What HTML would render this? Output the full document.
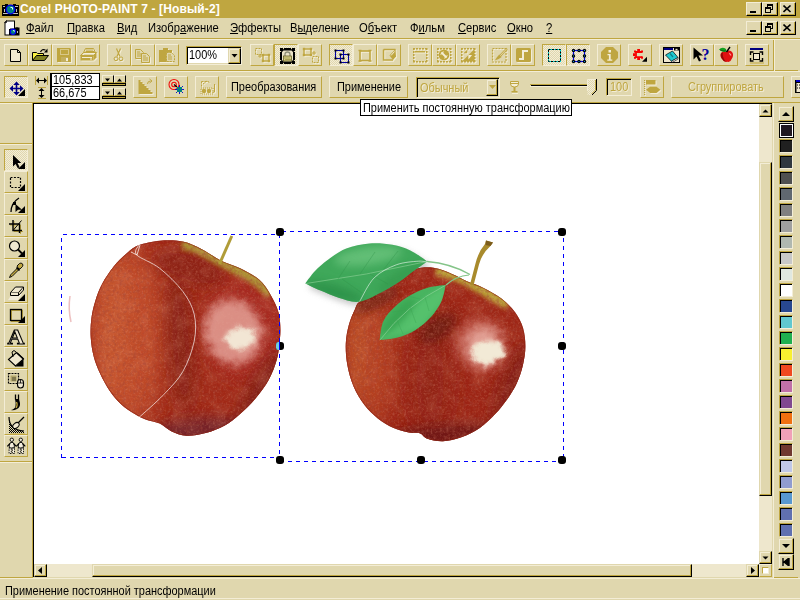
<!DOCTYPE html>
<html lang="ru"><head><meta charset="utf-8"><title>Corel PHOTO-PAINT 7 - [Новый-2]</title>
<style>
html,body{margin:0;padding:0;}
body{width:800px;height:600px;overflow:hidden;position:relative;background:#e0d7ae;font-family:"Liberation Sans","DejaVu Sans",sans-serif;font-size:11px;color:#000;}
.a,.b,.bd,.cap,.sb,.sw,.ln,svg{position:absolute;}
div{box-sizing:border-box;}
.t{position:absolute;white-space:nowrap;line-height:13px;font-size:12px;transform:scaleX(0.912);transform-origin:0 0;}
.b{border:1px solid;border-color:#f3edd6 #bfa640 #bfa640 #f3edd6;background:#e0d7ae;width:24px;height:22px;}
.bd{border:1px solid;border-color:#bfa640 #f3edd6 #f3edd6 #bfa640;width:24px;height:22px;background-color:#f3edd6;background-image:conic-gradient(#e0d7ae 25%,#f3edd6 0 50%,#e0d7ae 0 75%,#f3edd6 0);background-size:2px 2px;}
.cap{border:1px solid;border-color:#f3edd6 #000 #000 #f3edd6;background:#e0d7ae;box-shadow:inset -1px -1px 0 #bfa640;}
.sb{border:1px solid;border-color:#e0d7ae #000 #000 #e0d7ae;background:#e0d7ae;box-shadow:inset -1px -1px 0 #bfa640,inset 1px 1px 0 #f3edd6;}
.ln{height:1px;}
.menu .t{top:22px;transform:scaleX(0.935);}
.dis{color:#bfa640;text-shadow:1px 1px 0 #f3edd6;}
</style></head><body>
<div class="a" style="left:0;top:0;width:800px;height:18px;background:#bfa640"></div>
<div class="t" style="left:20px;top:3px;color:#fff;font-weight:bold;transform:none;letter-spacing:0.13px">Corel PHOTO-PAINT 7 - [Новый-2]</div>
<svg style="left:2px;top:3px" width="17" height="14" viewBox="0 0 17 14"><path d="M0 2h3v-1h3v1h5v-1h3v1h3v11h-17z" fill="#000"/><rect x="1" y="3" width="2" height="1" fill="#c0c0c0"/><rect x="13" y="3" width="3" height="1" fill="#c0c0c0"/><rect x="1" y="10" width="15" height="1" fill="#c0c0c0"/><rect x="14" y="6" width="1" height="3" fill="#c0c0c0"/><rect x="2" y="6" width="1" height="3" fill="#c0c0c0"/><circle cx="8.500" cy="6.500" r="4.300" fill="#008080" stroke="#0000f0" stroke-width="1.300"/><path d="M8.500 4.500h2v2" stroke="#e0ffff" stroke-width="1" fill="none"/></svg>
<div class="cap" style="left:746px;top:2px;width:16px;height:14px"></div>
<div class="a" style="left:750px;top:11px;width:6px;height:2px;background:#000"></div>
<div class="cap" style="left:762px;top:2px;width:16px;height:14px"></div>
<svg style="left:762px;top:2px" width="16" height="14" viewBox="0 0 16 14" shape-rendering="crispEdges"><path d="M5 2h6v2h-6zM10 4h1v4h-1zM5 4h1v1h-1zM9 7h1v1h-1z" fill="#000"/><path d="M3 5h6v2h-6zM3 7h1v4h-1zM8 7h1v4h-1zM3 10h6v1h-6z" fill="#000"/></svg>
<div class="cap" style="left:780px;top:2px;width:16px;height:14px"></div>
<svg style="left:783px;top:5px" width="9" height="8" viewBox="0 0 9 8"><path d="M0.5 0.5L7.5 7M7.5 0.5L0.5 7" stroke="#000" stroke-width="1.6" fill="none"/></svg>
<div class="cap" style="left:746px;top:21px;width:16px;height:14px"></div>
<div class="a" style="left:750px;top:30px;width:6px;height:2px;background:#000"></div>
<div class="cap" style="left:762px;top:21px;width:16px;height:14px"></div>
<svg style="left:762px;top:21px" width="16" height="14" viewBox="0 0 16 14" shape-rendering="crispEdges"><path d="M5 2h6v2h-6zM10 4h1v4h-1zM5 4h1v1h-1zM9 7h1v1h-1z" fill="#000"/><path d="M3 5h6v2h-6zM3 7h1v4h-1zM8 7h1v4h-1zM3 10h6v1h-6z" fill="#000"/></svg>
<div class="cap" style="left:780px;top:21px;width:16px;height:14px"></div>
<svg style="left:783px;top:24px" width="9" height="8" viewBox="0 0 9 8"><path d="M0.5 0.5L7.5 7M7.5 0.5L0.5 7" stroke="#000" stroke-width="1.6" fill="none"/></svg>
<div class="menu">
<span class="t" style="left:26px"><u>Ф</u>айл</span>
<span class="t" style="left:67px"><u>П</u>равка</span>
<span class="t" style="left:117px"><u>В</u>ид</span>
<span class="t" style="left:148px">Изобр<u>а</u>жение</span>
<span class="t" style="left:230px"><u>Э</u>ффекты</span>
<span class="t" style="left:290px">В<u>ы</u>деление</span>
<span class="t" style="left:359px">О<u>б</u>ъект</span>
<span class="t" style="left:410px">Ф<u>и</u>льм</span>
<span class="t" style="left:458px"><u>С</u>ервис</span>
<span class="t" style="left:507px"><u>О</u>кно</span>
<span class="t" style="left:546px"><u>?</u></span>
</div>
<svg style="left:4px;top:20px" width="16" height="16" viewBox="0 0 16 16"><path d="M2.500 0.500h8.500v7h4.500v8h-15v-13z" fill="#000"/><path d="M3 1.500h7v7h-4v6h-4.500v-11z" fill="#fff"/><path d="M0.500 2.500l2-2v2z" fill="#fff" stroke="#000" stroke-width="0.800"/><rect x="5" y="9" width="10" height="6" fill="#000"/><rect x="12" y="7.500" width="2" height="1.500" fill="#000"/><circle cx="9" cy="11.800" r="2.700" fill="#008080" stroke="#0000f0" stroke-width="1.100"/><path d="M9 10.500h1.300v1.300" stroke="#e0ffff" stroke-width="0.800" fill="none"/><rect x="13" y="11" width="1" height="2" fill="#c0c0c0"/></svg>
<div class="ln" style="left:0;top:38px;width:800px;background:#bfa640"></div>
<div class="ln" style="left:0;top:39px;width:800px;background:#f3edd6"></div>
<div class="ln" style="left:0;top:70px;width:798px;background:#bfa640"></div>
<div class="ln" style="left:0;top:71px;width:800px;background:#f3edd6"></div>
<div class="a" style="left:773px;top:40px;width:1px;height:31px;background:#bfa640"></div>
<div class="a" style="left:774px;top:40px;width:1px;height:31px;background:#f3edd6"></div>
<div class="b" style="left:4px;top:44px"></div>
<svg style="left:4px;top:43px" width="24" height="22" viewBox="0 0 24 22"><path d="M6.5 6.5h7l3 3v9h-10z" fill="#f0e8d0" stroke="#000"/><path d="M13.5 6.5v3h3" fill="none" stroke="#000"/></svg>
<div class="b" style="left:28px;top:44px"></div>
<svg style="left:28px;top:43px" width="24" height="22" viewBox="0 0 24 22"><path d="M4.500 17.500v-8h4l1 1h6v2" fill="#f8f040" stroke="#000"/><path d="M5 10h3.500l1 1h5.500v1.500h-7l-3 4z" fill="#f8f040"/><path d="M4.500 17.500l4-5h12l-4 5z" fill="#808020" stroke="#000"/><path d="M12.500 9q1.500-3.500 5-2" fill="none" stroke="#000" stroke-width="1.200"/><path d="M16 9.500h3.500v-4z" fill="#000"/></svg>
<div class="b" style="left:52px;top:44px"></div>
<svg style="left:52px;top:43px" width="24" height="22" viewBox="0 0 24 22"><g transform="translate(1 1)" style="--c:#f3edd6"><path d="M5 5h13l1 1v13h-14z" fill="#f3edd6"/></g><g><path d="M5 5h13l1 1v13h-14z" fill="#bfa640"/></g><rect x="8.5" y="6.500" width="8" height="5" fill="none" stroke="#d8c888"/><rect x="9" y="14" width="7" height="5" fill="#c4b060"/><rect x="14" y="15" width="2" height="3" fill="#f3edd6"/></svg>
<div class="b" style="left:76px;top:44px"></div>
<svg style="left:76px;top:43px" width="24" height="22" viewBox="0 0 24 22"><g transform="translate(1 1)" style="--c:#f3edd6"><path d="M9.500 5.500h8l2 4h-12z" fill="none" stroke="#f3edd6"/><path d="M10 7h7M9.500 8.500h9" stroke="#f3edd6"/><path d="M4.500 12.500l3-3h13l-3 3z" fill="none" stroke="#f3edd6"/><path d="M4.500 12.500h13v5h-13z" fill="#f3edd6"/><path d="M17.500 12.500l3-3v5l-3 3z" fill="#f3edd6"/></g><g><path d="M9.500 5.500h8l2 4h-12z" fill="none" stroke="#bfa640"/><path d="M10 7h7M9.500 8.500h9" stroke="#bfa640"/><path d="M4.500 12.500l3-3h13l-3 3z" fill="none" stroke="#bfa640"/><path d="M4.500 12.500h13v5h-13z" fill="#bfa640"/><path d="M17.500 12.500l3-3v5l-3 3z" fill="#bfa640"/></g><path d="M6 14.500h10" stroke="#f3edd6"/><rect x="14" y="15.500" width="2" height="1" fill="#f3edd6"/></svg>
<div class="b" style="left:107px;top:44px"></div>
<svg style="left:107px;top:43px" width="24" height="22" viewBox="0 0 24 22"><g transform="translate(1 1)" style="--c:#f3edd6"><path d="M9.500 5.500l3.500 8M13.500 5.500l-3.500 8" stroke="#f3edd6" fill="none" stroke-width="1.200"/><circle cx="9" cy="15.800" r="1.900" fill="none" stroke="#f3edd6"/><circle cx="14" cy="15.800" r="1.900" fill="none" stroke="#f3edd6"/></g><g><path d="M9.500 5.500l3.500 8M13.500 5.500l-3.500 8" stroke="#bfa640" fill="none" stroke-width="1.200"/><circle cx="9" cy="15.800" r="1.900" fill="none" stroke="#bfa640"/><circle cx="14" cy="15.800" r="1.900" fill="none" stroke="#bfa640"/></g></svg>
<div class="b" style="left:131px;top:44px"></div>
<svg style="left:131px;top:43px" width="24" height="22" viewBox="0 0 24 22"><g transform="translate(1 1)" style="--c:#f3edd6"><path d="M4.500 6.500h5l3 3v6h-8z" fill="#e0d7ae" stroke="#f3edd6"/><path d="M6 9h3M6 11h5M6 13h5" stroke="#f3edd6"/><path d="M10.500 10.500h5l3 3v6h-8z" fill="#e0d7ae" stroke="#f3edd6"/><path d="M12 13h3M12 15h5M12 17h5" stroke="#f3edd6"/></g><g><path d="M4.500 6.500h5l3 3v6h-8z" fill="#e0d7ae" stroke="#bfa640"/><path d="M6 9h3M6 11h5M6 13h5" stroke="#bfa640"/><path d="M10.500 10.500h5l3 3v6h-8z" fill="#e0d7ae" stroke="#bfa640"/><path d="M12 13h3M12 15h5M12 17h5" stroke="#bfa640"/></g></svg>
<div class="b" style="left:155px;top:44px"></div>
<svg style="left:155px;top:43px" width="24" height="22" viewBox="0 0 24 22"><g transform="translate(1 1)" style="--c:#f3edd6"><path d="M4 7h4v-2h5v2h4v12h-13z" fill="#f3edd6"/></g><g><path d="M4 7h4v-2h5v2h4v12h-13z" fill="#bfa640"/></g><path d="M11.500 9.500h5l3 3v6h-8z" fill="#e0d7ae" stroke="#bfa640" stroke-dasharray="2 1"/><path d="M13 12h3M13 14h4M13 16h4" stroke="#bfa640"/></svg>
<div class="b" style="left:250px;top:44px"></div>
<svg style="left:250px;top:43px" width="24" height="22" viewBox="0 0 24 22"><g transform="translate(1 1)" style="--c:#f3edd6"><rect x="5.500" y="5.500" width="6" height="6" fill="none" stroke="#f3edd6" stroke-dasharray="2 1"/><path d="M8 13h4M10 11v4" stroke="#f3edd6"/><rect x="13" y="12" width="6" height="6" fill="none" stroke="#f3edd6" stroke-width="1.400"/><rect x="11.8" y="10.8" width="2.400" height="2.400" fill="#f3edd6"/><rect x="11.8" y="16.8" width="2.400" height="2.400" fill="#f3edd6"/><rect x="17.8" y="10.8" width="2.400" height="2.400" fill="#f3edd6"/><rect x="17.8" y="16.8" width="2.400" height="2.400" fill="#f3edd6"/></g><g><rect x="5.500" y="5.500" width="6" height="6" fill="none" stroke="#bfa640" stroke-dasharray="2 1"/><path d="M8 13h4M10 11v4" stroke="#bfa640"/><rect x="13" y="12" width="6" height="6" fill="none" stroke="#bfa640" stroke-width="1.400"/><rect x="11.8" y="10.8" width="2.400" height="2.400" fill="#bfa640"/><rect x="11.8" y="16.8" width="2.400" height="2.400" fill="#bfa640"/><rect x="17.8" y="10.8" width="2.400" height="2.400" fill="#bfa640"/><rect x="17.8" y="16.8" width="2.400" height="2.400" fill="#bfa640"/></g></svg>
<div class="bd" style="left:274px;top:44px"></div>
<svg style="left:274px;top:43px" width="24" height="22" viewBox="0 0 24 22"><path d="M6 5h15v16h-15z" fill="#000"/><path d="M6 8.500h1.200M6 17.500h1.200M19.800 8.500h1.200M19.800 17.500h1.200M9.500 5v1.200M17.500 5v1.200M9.500 19.800v1.200M17.500 19.800v1.200" stroke="#e0d7ae"/><path d="M9.500 7.500h8l1.500 1.500v8l-1.500 1.500h-8l-1.500-1.500v-8z" fill="#ece4c8"/><path d="M11 13.500v-2.200q0-2.300 2.500-2.300t2.500 2.300v2.200" fill="none" stroke="#909078" stroke-width="1.300"/><rect x="9.500" y="13" width="8" height="5" fill="#d8d088" stroke="#585018" stroke-width="0.700"/><path d="M10.500 15h6" stroke="#787020" stroke-dasharray="1 1"/><path d="M10.500 16.500h6" stroke="#787020" stroke-dasharray="1 1" stroke-dashoffset="1"/></svg>
<div class="b" style="left:298px;top:44px"></div>
<svg style="left:298px;top:43px" width="24" height="22" viewBox="0 0 24 22"><g transform="translate(1 1)" style="--c:#f3edd6"><rect x="6" y="6" width="7" height="6" fill="none" stroke="#f3edd6" stroke-width="1.400"/><rect x="4.8" y="4.8" width="2.400" height="2.400" fill="#f3edd6"/><rect x="4.8" y="10.8" width="2.400" height="2.400" fill="#f3edd6"/><rect x="11.8" y="4.8" width="2.400" height="2.400" fill="#f3edd6"/><rect x="11.8" y="10.8" width="2.400" height="2.400" fill="#f3edd6"/><rect x="14.500" y="13.500" width="6" height="6" fill="none" stroke="#f3edd6" stroke-dasharray="2 1"/><path d="M14 10h4M16 8v4" stroke="#f3edd6"/></g><g><rect x="6" y="6" width="7" height="6" fill="none" stroke="#bfa640" stroke-width="1.400"/><rect x="4.8" y="4.8" width="2.400" height="2.400" fill="#bfa640"/><rect x="4.8" y="10.8" width="2.400" height="2.400" fill="#bfa640"/><rect x="11.8" y="4.8" width="2.400" height="2.400" fill="#bfa640"/><rect x="11.8" y="10.8" width="2.400" height="2.400" fill="#bfa640"/><rect x="14.500" y="13.500" width="6" height="6" fill="none" stroke="#bfa640" stroke-dasharray="2 1"/><path d="M14 10h4M16 8v4" stroke="#bfa640"/></g></svg>
<div class="bd" style="left:329px;top:44px"></div>
<svg style="left:329px;top:43px" width="24" height="22" viewBox="0 0 24 22"><rect x="6.5" y="7.5" width="8" height="8" fill="none" stroke="#0000a0" stroke-width="1.100"/><rect x="5.5" y="6.5" width="2" height="2" fill="#000"/><rect x="5.5" y="14.5" width="2" height="2" fill="#000"/><rect x="13.5" y="6.5" width="2" height="2" fill="#000"/><rect x="13.5" y="14.5" width="2" height="2" fill="#000"/><rect x="11.5" y="11.5" width="8" height="8" fill="none" stroke="#0000a0" stroke-width="1.100"/><rect x="10.5" y="10.5" width="2" height="2" fill="#000"/><rect x="10.5" y="18.5" width="2" height="2" fill="#000"/><rect x="18.5" y="10.5" width="2" height="2" fill="#000"/><rect x="18.5" y="18.5" width="2" height="2" fill="#000"/></svg>
<div class="b" style="left:353px;top:44px"></div>
<svg style="left:353px;top:43px" width="24" height="22" viewBox="0 0 24 22"><g transform="translate(1 1)" style="--c:#f3edd6"><rect x="7" y="8" width="10" height="9.500" fill="none" stroke="#f3edd6" stroke-width="1.600"/><path d="M5.500 7.500h3M5.500 18h3M15.500 7.500h3M15.500 18h3" stroke="#f3edd6" stroke-width="1.600"/></g><g><rect x="7" y="8" width="10" height="9.500" fill="none" stroke="#bfa640" stroke-width="1.600"/><path d="M5.500 7.500h3M5.500 18h3M15.500 7.500h3M15.500 18h3" stroke="#bfa640" stroke-width="1.600"/></g></svg>
<div class="b" style="left:377px;top:44px"></div>
<svg style="left:377px;top:43px" width="24" height="22" viewBox="0 0 24 22"><g transform="translate(1 1)" style="--c:#f3edd6"><path d="M6.500 6.500h12M6.500 6.500v10.500h9.500" fill="none" stroke="#f3edd6" stroke-width="1.500"/><path d="M18.500 6l-6 6.500l3.500 4.500l3-3.500z" fill="#f3edd6"/></g><g><path d="M6.500 6.500h12M6.500 6.500v10.500h9.500" fill="none" stroke="#bfa640" stroke-width="1.500"/><path d="M18.500 6l-6 6.500l3.500 4.500l3-3.500z" fill="#bfa640"/></g><path d="M17.500 8.500l-3.500 4" stroke="#f3edd6"/></svg>
<div class="b" style="left:408px;top:44px"></div>
<svg style="left:408px;top:43px" width="24" height="22" viewBox="0 0 24 22"><g transform="translate(1 1)" style="--c:#f3edd6"><path d="M5 5.750h14M5 18.750h14M5.750 5v14M18.750 5v14" stroke="#f3edd6" stroke-width="1.500" stroke-dasharray="2 1" fill="none"/><path d="M7 8.750h10" fill="none" stroke="#f3edd6" stroke-width="1.500"/></g><g><path d="M5 5.750h14M5 18.750h14M5.750 5v14M18.750 5v14" stroke="#bfa640" stroke-width="1.500" stroke-dasharray="2 1" fill="none"/><path d="M7 8.750h10" fill="none" stroke="#bfa640" stroke-width="1.500"/></g></svg>
<div class="b" style="left:432px;top:44px"></div>
<svg style="left:432px;top:43px" width="24" height="22" viewBox="0 0 24 22"><g transform="translate(1 1)" style="--c:#f3edd6"><path d="M5 5.750h14M5 18.750h14M5.750 5v14M18.750 5v14" stroke="#f3edd6" stroke-width="1.500" stroke-dasharray="2 1" fill="none"/><circle cx="12" cy="12" r="5.400" fill="#f3edd6"/></g><g><path d="M5 5.750h14M5 18.750h14M5.750 5v14M18.750 5v14" stroke="#bfa640" stroke-width="1.500" stroke-dasharray="2 1" fill="none"/><circle cx="12" cy="12" r="5.400" fill="#bfa640"/></g><path d="M9.500 9.500l5 5" stroke="#f3edd6" stroke-width="1.800"/><path d="M8.800 12a3.200 3.200 0 0 1 3.200-3.200M15.200 12a3.200 3.200 0 0 1-3.200 3.200" stroke="#f3edd6" stroke-width="0.800" fill="none"/></svg>
<div class="b" style="left:456px;top:44px"></div>
<svg style="left:456px;top:43px" width="24" height="22" viewBox="0 0 24 22"><g transform="translate(1 1)" style="--c:#f3edd6"><path d="M5 5.750h14M5 18.750h14M5.750 5v14M18.750 5v14" stroke="#f3edd6" stroke-width="1.500" stroke-dasharray="2 1" fill="none"/><path d="M18.500 6v12.500h-12.500zM7.500 10.250h3.750v-3.400z" fill="#f3edd6"/></g><g><path d="M5 5.750h14M5 18.750h14M5.750 5v14M18.750 5v14" stroke="#bfa640" stroke-width="1.500" stroke-dasharray="2 1" fill="none"/><path d="M18.500 6v12.500h-12.500zM7.500 10.250h3.750v-3.400z" fill="#bfa640"/></g><path d="M12.400 12.100h3.700l-3.700 4.500z" fill="#f3edd6"/></svg>
<div class="b" style="left:487px;top:44px"></div>
<svg style="left:487px;top:43px" width="24" height="22" viewBox="0 0 24 22"><g transform="translate(1 1)" style="--c:#f3edd6"><rect x="5.500" y="5.500" width="13.500" height="13.500" fill="none" stroke="#f3edd6" stroke-width="1.200" stroke-dasharray="2 1"/></g><g><rect x="5.500" y="5.500" width="13.500" height="13.500" fill="none" stroke="#bfa640" stroke-width="1.200" stroke-dasharray="2 1"/></g><path d="M20 5.500l-7 7.500" stroke="#bfa640" stroke-width="2.200"/><path d="M19.600 5.900l-6.500 7" stroke="#f3edd6" stroke-width="0.700"/><path d="M12.200 11.500l2.500 2.500l-3 2l-4 1.500l2-3z" fill="#bfa640"/></svg>
<div class="b" style="left:511px;top:44px"></div>
<svg style="left:511px;top:43px" width="24" height="22" viewBox="0 0 24 22"><g transform="translate(1 1)" style="--c:#f3edd6"><rect x="5" y="5" width="15" height="14" rx="1.500" fill="#f3edd6"/></g><g><rect x="5" y="5" width="15" height="14" rx="1.500" fill="#bfa640"/></g><path d="M8 16h4v-8h5" fill="none" stroke="#f3edd6" stroke-width="2"/></svg>
<div class="bd" style="left:542px;top:44px"></div>
<svg style="left:542px;top:43px" width="24" height="22" viewBox="0 0 24 22"><rect x="6.500" y="6.500" width="12" height="12" fill="none" stroke="#00e0e0"/><rect x="6.500" y="6.500" width="12" height="12" fill="none" stroke="#000" stroke-dasharray="2 1.500"/></svg>
<div class="bd" style="left:566px;top:44px"></div>
<svg style="left:566px;top:43px" width="24" height="22" viewBox="0 0 24 22"><rect x="7.500" y="7.500" width="11" height="11" fill="none" stroke="#0000f0" stroke-width="1.200"/><circle cx="7.5" cy="7.5" r="1.700" fill="#000"/><rect x="7.0" y="7.0" width="1" height="1" fill="#0090e0"/><circle cx="7.5" cy="13" r="1.700" fill="#000"/><rect x="7.0" y="12.5" width="1" height="1" fill="#0090e0"/><circle cx="7.5" cy="18.5" r="1.700" fill="#000"/><rect x="7.0" y="18.0" width="1" height="1" fill="#0090e0"/><circle cx="13" cy="7.5" r="1.700" fill="#000"/><rect x="12.5" y="7.0" width="1" height="1" fill="#0090e0"/><circle cx="13" cy="18.5" r="1.700" fill="#000"/><rect x="12.5" y="18.0" width="1" height="1" fill="#0090e0"/><circle cx="18.5" cy="7.5" r="1.700" fill="#000"/><rect x="18.0" y="7.0" width="1" height="1" fill="#0090e0"/><circle cx="18.5" cy="13" r="1.700" fill="#000"/><rect x="18.0" y="12.5" width="1" height="1" fill="#0090e0"/><circle cx="18.5" cy="18.5" r="1.700" fill="#000"/><rect x="18.0" y="18.0" width="1" height="1" fill="#0090e0"/></svg>
<div class="b" style="left:597px;top:44px"></div>
<svg style="left:597px;top:43px" width="24" height="22" viewBox="0 0 24 22"><path d="M9 4h7l5 5v6l-5 5h-7l-5-5v-6z" fill="#bfa640"/><rect x="11.500" y="7" width="2.500" height="2.500" fill="#f3edd6"/><path d="M10.500 11h3.200v5.500h1.600v1.200h-5v-1.200h1.600v-4.300h-1.400z" fill="#f3edd6"/></svg>
<div class="b" style="left:628px;top:44px"></div>
<svg style="left:628px;top:43px" width="24" height="22" viewBox="0 0 24 22"><path d="M14.200 9H8V14.200H14.200" fill="none" stroke="#f80000" stroke-width="1.800"/><path d="M9.200 6h2.800v2.400h-2.800zM9.200 14.800h2.800v2.200h-2.800zM5 10.200h2.400v2.800h-2.400zM6 7.400h2v2h-2zM6 13.800h2v2h-2zM13 7.400h2v2.200h-2zM13 13.600h2v2.200h-2z" fill="#f80000"/><path d="M14 18.700h5v-5z" fill="#000"/></svg>
<div class="b" style="left:659px;top:44px"></div>
<svg style="left:659px;top:43px" width="24" height="22" viewBox="0 0 24 22"><rect x="4" y="4" width="17" height="16" fill="#000"/><rect x="5" y="5" width="15" height="14" fill="#f0e8d0"/><rect x="5" y="5" width="9" height="2" fill="#000080"/><rect x="15" y="5" width="5" height="2.500" fill="#000"/><rect x="16.500" y="5.800" width="2" height="1.500" fill="#f0e8d0"/><path d="M6.500 12l7-4l5.500 6.500l-6.500 3.800z" fill="#20c8d0" stroke="#000" stroke-width="0.700"/><path d="M12.500 18.300l6.500-3.800v1.600l-5.500 3.200z" fill="#f8f8f8" stroke="#000" stroke-width="0.600"/><path d="M11 10.500l3 3.500" stroke="#108088" stroke-width="1.200"/></svg>
<div class="b" style="left:690px;top:44px"></div>
<svg style="left:690px;top:43px" width="24" height="22" viewBox="0 0 24 22"><path d="M3.500 4.500v12l3-3l2.500 5l2-1l-2.500-5h4.500z" fill="#000"/><text x="11.500" y="17" font-family="Liberation Serif,serif" font-weight="bold" font-size="16" fill="#0000a0">?</text></svg>
<div class="b" style="left:714px;top:44px"></div>
<svg style="left:714px;top:43px" width="24" height="22" viewBox="0 0 24 22"><path d="M12 8.500q3-1.800 5.500 0q2.500 2.200 1 6q-1.500 3.800-4 4.600q-1.200-.5-2.300 0q-3-.6-5-4q-2-4 .8-6.200q2-1.400 4 0z" fill="#e01010"/><path d="M7.500 10q-1.500 2 0 5q1.500 3 4.500 4q-2.500-3-3-5.500t0-4z" fill="#900808"/><path d="M15 10.500q1.500.3 2 2" stroke="#ff9090" stroke-width="1.200" fill="none"/><path d="M5 6.500q3-3 7-.5l.5 2.500q-4 1.500-7.500-2z" fill="#10a020"/><path d="M6 7q3 1 6 1" stroke="#086010" stroke-width="0.800" fill="none"/><path d="M12.500 9l3.500-5" stroke="#000" stroke-width="1.400"/></svg>
<div class="b" style="left:745px;top:44px"></div>
<svg style="left:745px;top:43px" width="24" height="22" viewBox="0 0 24 22"><rect x="5" y="5" width="13" height="2" fill="#000080"/><path d="M5.500 12v-3h3M14.500 9h3v3M17.500 15v3h-3M8.500 18h-3v-3" fill="none" stroke="#000" stroke-width="1.400"/><rect x="8.500" y="10.500" width="6" height="6" fill="#f0e8d0" stroke="#000"/><path d="M5 20h14" stroke="#bfa640"/></svg>
<div class="a" style="left:186px;top:46px;width:56px;height:19px;border:1px solid;border-color:#bfa640 #f3edd6 #f3edd6 #bfa640;background:#fff;box-shadow:inset 1px 1px 0 #000,inset -1px -1px 0 #e0d7ae"></div>
<div class="t" style="left:189px;top:49px">100%</div>
<div class="sb" style="left:228px;top:48px;width:13px;height:16px"></div>
<svg style="left:231px;top:54px" width="7" height="4"><path d="M0.500 0h6L3.500 3.500z" fill="#000"/></svg>
<div class="bd" style="left:4px;top:76px"></div>
<svg style="left:4px;top:76px" width="24" height="22" viewBox="0 0 24 22"><path d="M12.500 5.500l3.200 3.500h-2.400v2.700h2.700v-2.400l3.500 3.200l-3.500 3.200v-2.400h-2.700v2.700h2.400l-3.200 3.500l-3.200-3.500h2.400v-2.700h-2.700v2.400l-3.500-3.200l3.500-3.200v2.400h2.700v-2.700h-2.400z" fill="#000088"/><path d="M21 20h-7l7-7z" fill="#000"/></svg>
<div class="a" style="left:50px;top:73px;width:50px;height:14px;background:#fff;border:1px solid #000;border-width:1px 1px 1px 2px"></div>
<div class="t" style="left:53px;top:74px">105,833</div>
<div class="a" style="left:50px;top:86px;width:50px;height:14px;background:#fff;border:1px solid #000;border-width:1px 1px 1px 2px"></div>
<div class="t" style="left:53px;top:87px">66,675</div>
<svg style="left:34px;top:74px" width="16" height="26" viewBox="34 74 16 26"><path d="M35.5 76v9M47.5 76v9M38 87.500h8M38 98.500h8" stroke="#bfa640" fill="none"/><path d="M37 80.500h9" stroke="#000"/><path d="M36 80.500l3-3v6zM47 80.500l-3-3v6zM41.500 88l-3 3h6zM41.500 98l-3-3h6z" fill="#000"/><path d="M41.500 90v6" stroke="#000"/></svg>
<div class="a" style="left:102px;top:75px;width:12px;height:8px;background:#e0d7ae;border:1px solid;border-color:#f3edd6 #000 #bfa640 #f3edd6"></div>
<svg style="left:105px;top:78px" width="5" height="4"><path d="M0 0.500h5L2.500 3.500z" fill="#000"/></svg>
<div class="a" style="left:114px;top:75px;width:12px;height:8px;background:#e0d7ae;border:1px solid;border-color:#f3edd6 #000 #bfa640 #f3edd6"></div>
<svg style="left:117px;top:78px" width="5" height="4"><path d="M0 3.500h5L2.500 0.500z" fill="#000"/></svg>
<div class="a" style="left:102px;top:83px;width:24px;height:3px;background:#bfa640;border:1px solid #000"></div>
<div class="a" style="left:102px;top:88px;width:12px;height:8px;background:#e0d7ae;border:1px solid;border-color:#f3edd6 #000 #bfa640 #f3edd6"></div>
<svg style="left:105px;top:91px" width="5" height="4"><path d="M0 0.500h5L2.500 3.500z" fill="#000"/></svg>
<div class="a" style="left:114px;top:88px;width:12px;height:8px;background:#e0d7ae;border:1px solid;border-color:#f3edd6 #000 #bfa640 #f3edd6"></div>
<svg style="left:117px;top:91px" width="5" height="4"><path d="M0 3.500h5L2.500 0.500z" fill="#000"/></svg>
<div class="a" style="left:102px;top:96px;width:24px;height:3px;background:#bfa640;border:1px solid #000"></div>
<div class="b" style="left:133px;top:76px"></div>
<svg style="left:133px;top:76px" width="24" height="22" viewBox="0 0 24 22"><g transform="translate(1 1)" style="--c:#f3edd6"><path d="M5.500 4v14h14v-2h-2v-2h-2v-2h-2v-2h-2v-2h-2v-2h-2v-2z" fill="#f3edd6"/></g><g><path d="M5.500 4v14h14v-2h-2v-2h-2v-2h-2v-2h-2v-2h-2v-2h-2v-2z" fill="#bfa640"/></g><path d="M14.500 8q0-3 3-3" fill="none" stroke="#bfa640"/><path d="M16.500 3l2.500 2l-2.500 2" fill="none" stroke="#bfa640"/></svg>
<div class="b" style="left:164px;top:76px"></div>
<svg style="left:164px;top:76px" width="24" height="22" viewBox="0 0 24 22"><circle cx="10" cy="8.500" r="5" fill="none" stroke="#f01010" stroke-width="1.100"/><circle cx="10" cy="8.500" r="2.300" fill="none" stroke="#f01010" stroke-width="1.100"/><path d="M12 10l7 7M19 10l-7 7M15.500 9v9M11 13.500h9" stroke="#0000d0" stroke-width="0.900"/><rect x="13" y="11" width="5" height="5" fill="#008080"/><path d="M10 8.500l3 2.500" stroke="#000" stroke-width="1.200"/></svg>
<div class="b" style="left:195px;top:76px"></div>
<svg style="left:195px;top:76px" width="24" height="22" viewBox="0 0 24 22"><g transform="translate(1 1)" style="--c:#f3edd6"><path d="M6.500 5.500h7M6.500 5.500v5M8 8l4-3l3 2" fill="none" stroke="#f3edd6" stroke-dasharray="2 1"/><path d="M6 12h12v6h-12z" fill="none" stroke="#f3edd6" stroke-dasharray="1 1"/><circle cx="9" cy="15" r="2.200" fill="#f3edd6"/><circle cx="14" cy="15" r="2.200" fill="#f3edd6"/><path d="M19.500 8v8h-2" fill="none" stroke="#f3edd6"/></g><g><path d="M6.500 5.500h7M6.500 5.500v5M8 8l4-3l3 2" fill="none" stroke="#bfa640" stroke-dasharray="2 1"/><path d="M6 12h12v6h-12z" fill="none" stroke="#bfa640" stroke-dasharray="1 1"/><circle cx="9" cy="15" r="2.200" fill="#bfa640"/><circle cx="14" cy="15" r="2.200" fill="#bfa640"/><path d="M19.500 8v8h-2" fill="none" stroke="#bfa640"/></g></svg>
<div class="b" style="left:640px;top:76px"></div>
<svg style="left:640px;top:76px" width="24" height="22" viewBox="0 0 24 22"><g transform="translate(1 1)" style="--c:#f3edd6"><path d="M4.500 4v15" stroke="#f3edd6" stroke-dasharray="1 1"/><rect x="6" y="4" width="9.500" height="4.500" fill="#f3edd6"/><path d="M6 13.800l4-3h6.500l4 3l-4 3.200h-6.500z" fill="#f3edd6"/></g><g><path d="M4.500 4v15" stroke="#bfa640" stroke-dasharray="1 1"/><rect x="6" y="4" width="9.500" height="4.500" fill="#bfa640"/><path d="M6 13.800l4-3h6.500l4 3l-4 3.200h-6.500z" fill="#bfa640"/></g></svg>
<div class="b" style="left:226px;top:76px;width:96px"></div><div class="t" style="left:231px;top:81px">Преобразования</div>
<div class="b" style="left:329px;top:76px;width:79px"></div><div class="t" style="left:337px;top:81px">Применение</div>
<div class="b" style="left:671px;top:76px;width:113px"></div><div class="t dis" style="left:688px;top:81px">Сгруппировать</div>
<div class="b" style="left:791px;top:76px;width:24px"></div>
<svg style="left:794px;top:79px" width="6" height="16" viewBox="0 0 6 16"><rect x="1" y="1" width="5" height="13" fill="#000"/><rect x="2" y="1" width="4" height="2" fill="#0000c0"/><rect x="2.500" y="4" width="3.500" height="9" fill="#f0e8d0"/><path d="M3 6h3M3 9h3" stroke="#000" stroke-dasharray="1 1"/></svg>
<div class="a" style="left:416px;top:77px;width:84px;height:21px;border:1px solid;border-color:#bfa640 #f3edd6 #f3edd6 #bfa640;box-shadow:inset 1px 1px 0 #000,inset -1px -1px 0 #e0d7ae"></div>
<div class="t dis" style="left:420px;top:82px">Обычный</div>
<div class="sb" style="left:486px;top:79px;width:12px;height:17px"></div>
<svg style="left:489px;top:85px" width="7" height="4"><path d="M0 0h7L3.5 4z" fill="#bfa640"/></svg>
<div class="ln" style="left:530px;top:84px;width:58px;background:#bfa640"></div><div class="ln" style="left:531px;top:85px;width:57px;background:#000"></div><div class="ln" style="left:530px;top:86px;width:58px;background:#f3edd6"></div>
<svg style="left:508px;top:79px" width="14" height="16" viewBox="0 0 14 16"><path d="M2.500 2.500h8v2.500q0 3-4 3t-4-3z" fill="#f3edd6" stroke="#bfa640"/><path d="M3 4.500h7" stroke="#bfa640"/><path d="M5.500 8h2v4h-2z" fill="#bfa640"/><path d="M3.500 12h6v1.500h-6z" fill="#bfa640"/><path d="M4 14.500h6" stroke="#f3edd6"/></svg>
<svg style="left:587px;top:79px" width="11" height="17" viewBox="0 0 11 17"><defs><pattern id="dt2" width="2" height="2" patternUnits="userSpaceOnUse"><rect width="2" height="2" fill="#f3edd6"/><rect width="1" height="1" fill="#e0d7ae"/><rect x="1" y="1" width="1" height="1" fill="#e0d7ae"/></pattern></defs><path d="M0.5 0.5h9v11l-4.5 4.5h-4.500z" fill="url(#dt2)"/><path d="M0.5 12V0.5H9.5" stroke="#f3edd6" fill="none"/><path d="M9.5 0V11.5L5 16" stroke="#000" fill="none"/><path d="M8.5 1V11L4.5 15" stroke="#bfa640" fill="none"/></svg>
<div class="a" style="left:606px;top:78px;width:26px;height:18px;border:1px solid;border-color:#bfa640 #f3edd6 #f3edd6 #bfa640;box-shadow:inset 1px 1px 0 #000"></div>
<div class="t dis" style="left:610px;top:81px">100</div>
<div class="ln" style="left:0;top:102px;width:800px;background:#bfa640"></div>
<div class="ln" style="left:0;top:103px;width:32px;background:#f3edd6"></div>
<div class="a" style="left:33px;top:103px;width:739px;height:474px;background:#000"></div>
<div class="a" id="canvas" style="left:34px;top:104px;width:725px;height:460px;background:#fff;overflow:hidden">
<svg style="left:0;top:0" width="725" height="460" viewBox="34 104 725 460">
<defs>
<filter id="tx" x="0" y="0" width="100%" height="100%"><feTurbulence type="fractalNoise" baseFrequency="0.45" numOctaves="2" seed="4" result="n"/><feColorMatrix in="n" type="matrix" values="0 0 0 0 0.86  0 0 0 0 0.42  0 0 0 0 0.28  2.4 0 0 0 -1.15" result="c"/><feComposite in="c" in2="SourceGraphic" operator="in"/></filter>
<filter id="tx2" x="0" y="0" width="100%" height="100%"><feTurbulence type="fractalNoise" baseFrequency="0.3" numOctaves="3" seed="11" result="n"/><feColorMatrix in="n" type="matrix" values="0 0 0 0 0.36  0 0 0 0 0.06  0 0 0 0 0.04  0 2.6 0 0 -1.2" result="c"/><feComposite in="c" in2="SourceGraphic" operator="in"/></filter>
<filter id="tx3" x="0" y="0" width="100%" height="100%"><feTurbulence type="fractalNoise" baseFrequency="0.07" numOctaves="2" seed="2" result="n"/><feColorMatrix in="n" type="matrix" values="0 0 0 0 0.80  0 0 0 0 0.36  0 0 0 0 0.22  0 0 2.2 0 -0.95" result="c"/><feComposite in="c" in2="SourceGraphic" operator="in"/></filter>
<filter id="rough" x="-5%" y="-5%" width="110%" height="110%"><feTurbulence type="fractalNoise" baseFrequency="0.12" numOctaves="2" seed="7" result="n"/><feDisplacementMap in="SourceGraphic" in2="n" scale="9" xChannelSelector="R" yChannelSelector="G"/></filter>
<filter id="bl1" x="-60%" y="-60%" width="220%" height="220%"><feGaussianBlur stdDeviation="1"/></filter>
<filter id="bl2" x="-60%" y="-60%" width="220%" height="220%"><feGaussianBlur stdDeviation="2"/></filter>
<filter id="bl3" x="-60%" y="-60%" width="220%" height="220%"><feGaussianBlur stdDeviation="3"/></filter>
<filter id="bl4" x="-60%" y="-60%" width="220%" height="220%"><feGaussianBlur stdDeviation="4"/></filter>
<filter id="bl6" x="-60%" y="-60%" width="220%" height="220%"><feGaussianBlur stdDeviation="6"/></filter>
<filter id="bl8" x="-60%" y="-60%" width="220%" height="220%"><feGaussianBlur stdDeviation="8"/></filter>
<filter id="bl12" x="-60%" y="-60%" width="220%" height="220%"><feGaussianBlur stdDeviation="12"/></filter>
<linearGradient id="lf" x1="0" y1="0" x2="1" y2="1"><stop offset="0" stop-color="#56b86a"/><stop offset="0.5" stop-color="#44a85a"/><stop offset="1" stop-color="#2f9448"/></linearGradient>
<linearGradient id="lf2" x1="1" y1="0" x2="0" y2="1"><stop offset="0" stop-color="#5cc070"/><stop offset="0.6" stop-color="#44ac5a"/><stop offset="1" stop-color="#36a04e"/></linearGradient>
<clipPath id="cL"><path d="M138.6 245.3C144.0 243.2 152.3 241.3 159.7 240.7C167.0 240.1 175.7 240.1 182.7 241.5C189.7 242.9 195.4 246.0 201.8 249.2C208.2 252.4 214.6 257.5 221.0 260.7C227.4 263.9 233.7 265.1 240.1 268.3C246.5 271.5 254.2 275.3 259.3 279.8C264.4 284.3 267.6 289.8 270.8 295.2C274.0 300.6 276.9 306.6 278.5 312.4C280.1 318.1 280.3 324.3 280.4 329.7C280.5 335.1 279.8 339.9 279.2 345.0C278.6 350.1 278.3 354.6 276.6 360.3C274.9 366.1 272.4 373.1 268.9 379.5C265.4 385.9 260.3 392.9 255.5 398.6C250.7 404.4 245.2 409.5 240.1 414.0C235.0 418.5 230.6 422.3 224.8 425.5C219.1 428.7 212.0 431.4 205.6 433.1C199.2 434.8 192.2 436.1 186.5 435.8C180.8 435.5 175.7 433.2 171.2 431.2C166.7 429.2 163.9 425.5 159.7 423.6C155.5 421.7 150.4 421.3 146.2 419.7C142.0 418.1 138.8 416.6 134.7 414.0C130.5 411.4 125.4 408.2 121.3 404.4C117.2 400.6 113.3 396.1 109.8 391.0C106.3 385.9 102.9 379.4 100.2 373.7C97.5 367.9 95.3 362.6 93.7 356.5C92.1 350.4 91.1 343.7 90.7 337.3C90.3 330.9 90.6 324.3 91.4 318.2C92.2 312.1 93.5 306.6 95.3 300.9C97.1 295.1 99.1 289.4 102.2 283.7C105.3 277.9 109.6 271.5 113.7 266.4C117.8 261.3 122.9 256.5 127.1 253.0C131.2 249.5 133.2 247.4 138.6 245.3Z"/></clipPath>
<clipPath id="cR"><path d="M415.0 269.0C420.9 267.3 427.4 266.9 433.6 267.7C439.8 268.5 446.4 271.6 452.0 273.9C457.6 276.2 462.3 279.3 467.5 281.6C472.7 283.9 477.4 284.9 483.0 287.7C488.6 290.5 496.0 294.4 501.4 298.5C506.8 302.6 511.7 307.5 515.3 312.4C518.9 317.3 521.3 322.1 523.0 327.8C524.7 333.5 525.4 340.1 525.4 346.3C525.4 352.5 524.4 358.6 523.0 364.8C521.6 371.0 519.4 377.7 516.8 383.3C514.2 388.9 511.2 393.6 507.6 398.7C504.0 403.8 499.8 409.2 495.2 414.1C490.6 419.0 485.4 424.1 479.8 428.0C474.2 431.9 467.5 435.0 461.3 437.2C455.1 439.4 448.5 440.9 442.9 441.2C437.3 441.4 431.4 440.0 427.5 438.7C423.6 437.4 422.8 434.2 419.7 433.2C416.6 432.2 413.4 433.5 409.0 432.6C404.6 431.7 398.8 430.3 393.6 428.0C388.5 425.7 383.0 422.6 378.1 418.7C373.2 414.8 368.4 410.2 364.3 404.8C360.2 399.4 356.3 393.0 353.5 386.3C350.7 379.6 348.6 372.0 347.3 364.8C346.0 357.6 345.5 349.9 345.8 343.2C346.1 336.5 347.4 330.3 348.9 324.7C350.4 319.1 353.2 313.1 355.0 309.3C356.8 305.5 355.9 305.0 359.7 301.6C363.5 298.2 371.6 292.7 378.0 288.7C384.4 284.7 391.8 281.0 398.0 277.7C404.2 274.4 409.1 270.7 415.0 269.0Z"/></clipPath>
<clipPath id="cBL"><path d="M305.3 283.4C306.9 281.3 311.2 275.0 315.0 271.0C318.8 267.0 323.1 263.1 328.3 259.4C333.5 255.6 339.5 251.2 346.3 248.5C353.1 245.8 361.7 244.0 369.4 243.4C377.1 242.8 385.6 243.5 392.4 244.7C399.2 245.9 404.5 247.6 410.4 250.4C416.2 253.2 424.6 259.6 427.5 261.5L427.5 261.5C425.4 263.0 419.2 267.0 414.6 270.3C410.0 273.6 405.5 277.6 400.0 281.3C394.5 285.0 388.4 288.9 381.6 292.3C374.8 295.7 366.3 300.9 359.1 301.8C351.9 302.7 345.0 299.7 338.6 297.8C332.2 295.9 326.2 293.0 320.6 290.6C315.1 288.2 307.9 284.6 305.3 283.4Z"/></clipPath>
<clipPath id="cSL"><path d="M445.8 285.0C442.9 285.4 434.2 285.9 428.3 287.6C422.4 289.3 415.9 292.1 410.4 295.3C404.8 298.5 399.5 302.5 395.0 306.8C390.5 311.1 386.1 315.3 383.5 320.9C380.9 326.4 380.2 336.9 379.6 340.1L379.6 340.1C382.6 339.7 391.6 339.3 397.6 337.6C403.6 335.9 409.9 333.3 415.5 329.9C421.1 326.5 426.6 321.7 430.9 317.0C435.2 312.3 438.7 307.0 441.2 301.7C443.7 296.4 445.0 287.8 445.8 285.0Z"/></clipPath>
</defs>
<path d="M138.6 245.3C144.0 243.2 152.3 241.3 159.7 240.7C167.0 240.1 175.7 240.1 182.7 241.5C189.7 242.9 195.4 246.0 201.8 249.2C208.2 252.4 214.6 257.5 221.0 260.7C227.4 263.9 233.7 265.1 240.1 268.3C246.5 271.5 254.2 275.3 259.3 279.8C264.4 284.3 267.6 289.8 270.8 295.2C274.0 300.6 276.9 306.6 278.5 312.4C280.1 318.1 280.3 324.3 280.4 329.7C280.5 335.1 279.8 339.9 279.2 345.0C278.6 350.1 278.3 354.6 276.6 360.3C274.9 366.1 272.4 373.1 268.9 379.5C265.4 385.9 260.3 392.9 255.5 398.6C250.7 404.4 245.2 409.5 240.1 414.0C235.0 418.5 230.6 422.3 224.8 425.5C219.1 428.7 212.0 431.4 205.6 433.1C199.2 434.8 192.2 436.1 186.5 435.8C180.8 435.5 175.7 433.2 171.2 431.2C166.7 429.2 163.9 425.5 159.7 423.6C155.5 421.7 150.4 421.3 146.2 419.7C142.0 418.1 138.8 416.6 134.7 414.0C130.5 411.4 125.4 408.2 121.3 404.4C117.2 400.6 113.3 396.1 109.8 391.0C106.3 385.9 102.9 379.4 100.2 373.7C97.5 367.9 95.3 362.6 93.7 356.5C92.1 350.4 91.1 343.7 90.7 337.3C90.3 330.9 90.6 324.3 91.4 318.2C92.2 312.1 93.5 306.6 95.3 300.9C97.1 295.1 99.1 289.4 102.2 283.7C105.3 277.9 109.6 271.5 113.7 266.4C117.8 261.3 122.9 256.5 127.1 253.0C131.2 249.5 133.2 247.4 138.6 245.3Z" fill="#a22a18"/>
<g clip-path="url(#cL)">
<ellipse cx="128" cy="335" rx="36" ry="88" fill="#c24e2c" filter="url(#bl12)"/>
<ellipse cx="112" cy="330" rx="14" ry="70" fill="#c85a30" opacity="0.8" filter="url(#bl8)"/>
<ellipse cx="181" cy="345" rx="13" ry="70" fill="#842418" opacity="0.85" filter="url(#bl8)" transform="rotate(-4 181 345)"/>
<ellipse cx="190" cy="268" rx="38" ry="16" fill="#8c2216" opacity="0.9" filter="url(#bl6)" transform="rotate(18 190 268)"/>
<ellipse cx="243" cy="330" rx="40" ry="50" fill="#a82a20" opacity="0.9" filter="url(#bl8)"/>
<ellipse cx="262" cy="392" rx="14" ry="50" fill="#781a12" opacity="0.8" filter="url(#bl8)" transform="rotate(28 262 392)"/>
<ellipse cx="200" cy="430" rx="46" ry="13" fill="#70222a" opacity="0.9" filter="url(#bl6)" transform="rotate(-4 200 430)"/>
<path d="M182 244q14 1 24 8l33 18q20 9 32 24" stroke="#ac9c36" stroke-width="12" fill="none" filter="url(#bl2)" opacity="0.9"/>
<path d="M138.6 245.3C144.0 243.2 152.3 241.3 159.7 240.7C167.0 240.1 175.7 240.1 182.7 241.5C189.7 242.9 195.4 246.0 201.8 249.2C208.2 252.4 214.6 257.5 221.0 260.7C227.4 263.9 233.7 265.1 240.1 268.3C246.5 271.5 254.2 275.3 259.3 279.8C264.4 284.3 267.6 289.8 270.8 295.2C274.0 300.6 276.9 306.6 278.5 312.4C280.1 318.1 280.3 324.3 280.4 329.7C280.5 335.1 279.8 339.9 279.2 345.0C278.6 350.1 278.3 354.6 276.6 360.3C274.9 366.1 272.4 373.1 268.9 379.5C265.4 385.9 260.3 392.9 255.5 398.6C250.7 404.4 245.2 409.5 240.1 414.0C235.0 418.5 230.6 422.3 224.8 425.5C219.1 428.7 212.0 431.4 205.6 433.1C199.2 434.8 192.2 436.1 186.5 435.8C180.8 435.5 175.7 433.2 171.2 431.2C166.7 429.2 163.9 425.5 159.7 423.6C155.5 421.7 150.4 421.3 146.2 419.7C142.0 418.1 138.8 416.6 134.7 414.0C130.5 411.4 125.4 408.2 121.3 404.4C117.2 400.6 113.3 396.1 109.8 391.0C106.3 385.9 102.9 379.4 100.2 373.7C97.5 367.9 95.3 362.6 93.7 356.5C92.1 350.4 91.1 343.7 90.7 337.3C90.3 330.9 90.6 324.3 91.4 318.2C92.2 312.1 93.5 306.6 95.3 300.9C97.1 295.1 99.1 289.4 102.2 283.7C105.3 277.9 109.6 271.5 113.7 266.4C117.8 261.3 122.9 256.5 127.1 253.0C131.2 249.5 133.2 247.4 138.6 245.3Z" fill="#fff" filter="url(#tx3)" opacity="0.2"/>
<path d="M138.6 245.3C144.0 243.2 152.3 241.3 159.7 240.7C167.0 240.1 175.7 240.1 182.7 241.5C189.7 242.9 195.4 246.0 201.8 249.2C208.2 252.4 214.6 257.5 221.0 260.7C227.4 263.9 233.7 265.1 240.1 268.3C246.5 271.5 254.2 275.3 259.3 279.8C264.4 284.3 267.6 289.8 270.8 295.2C274.0 300.6 276.9 306.6 278.5 312.4C280.1 318.1 280.3 324.3 280.4 329.7C280.5 335.1 279.8 339.9 279.2 345.0C278.6 350.1 278.3 354.6 276.6 360.3C274.9 366.1 272.4 373.1 268.9 379.5C265.4 385.9 260.3 392.9 255.5 398.6C250.7 404.4 245.2 409.5 240.1 414.0C235.0 418.5 230.6 422.3 224.8 425.5C219.1 428.7 212.0 431.4 205.6 433.1C199.2 434.8 192.2 436.1 186.5 435.8C180.8 435.5 175.7 433.2 171.2 431.2C166.7 429.2 163.9 425.5 159.7 423.6C155.5 421.7 150.4 421.3 146.2 419.7C142.0 418.1 138.8 416.6 134.7 414.0C130.5 411.4 125.4 408.2 121.3 404.4C117.2 400.6 113.3 396.1 109.8 391.0C106.3 385.9 102.9 379.4 100.2 373.7C97.5 367.9 95.3 362.6 93.7 356.5C92.1 350.4 91.1 343.7 90.7 337.3C90.3 330.9 90.6 324.3 91.4 318.2C92.2 312.1 93.5 306.6 95.3 300.9C97.1 295.1 99.1 289.4 102.2 283.7C105.3 277.9 109.6 271.5 113.7 266.4C117.8 261.3 122.9 256.5 127.1 253.0C131.2 249.5 133.2 247.4 138.6 245.3Z" fill="#fff" filter="url(#tx)" opacity="0.26"/>
<path d="M138.6 245.3C144.0 243.2 152.3 241.3 159.7 240.7C167.0 240.1 175.7 240.1 182.7 241.5C189.7 242.9 195.4 246.0 201.8 249.2C208.2 252.4 214.6 257.5 221.0 260.7C227.4 263.9 233.7 265.1 240.1 268.3C246.5 271.5 254.2 275.3 259.3 279.8C264.4 284.3 267.6 289.8 270.8 295.2C274.0 300.6 276.9 306.6 278.5 312.4C280.1 318.1 280.3 324.3 280.4 329.7C280.5 335.1 279.8 339.9 279.2 345.0C278.6 350.1 278.3 354.6 276.6 360.3C274.9 366.1 272.4 373.1 268.9 379.5C265.4 385.9 260.3 392.9 255.5 398.6C250.7 404.4 245.2 409.5 240.1 414.0C235.0 418.5 230.6 422.3 224.8 425.5C219.1 428.7 212.0 431.4 205.6 433.1C199.2 434.8 192.2 436.1 186.5 435.8C180.8 435.5 175.7 433.2 171.2 431.2C166.7 429.2 163.9 425.5 159.7 423.6C155.5 421.7 150.4 421.3 146.2 419.7C142.0 418.1 138.8 416.6 134.7 414.0C130.5 411.4 125.4 408.2 121.3 404.4C117.2 400.6 113.3 396.1 109.8 391.0C106.3 385.9 102.9 379.4 100.2 373.7C97.5 367.9 95.3 362.6 93.7 356.5C92.1 350.4 91.1 343.7 90.7 337.3C90.3 330.9 90.6 324.3 91.4 318.2C92.2 312.1 93.5 306.6 95.3 300.9C97.1 295.1 99.1 289.4 102.2 283.7C105.3 277.9 109.6 271.5 113.7 266.4C117.8 261.3 122.9 256.5 127.1 253.0C131.2 249.5 133.2 247.4 138.6 245.3Z" fill="#fff" filter="url(#tx2)" opacity="0.5"/>
<g filter="url(#rough)">
<ellipse cx="233" cy="332" rx="29" ry="33" fill="#e4a096" opacity="0.85" filter="url(#bl4)" transform="rotate(-20 233 331)"/>
<ellipse cx="240" cy="338" rx="15" ry="11" fill="#f2e6d4" filter="url(#bl2)" transform="rotate(-12 240 338)"/>
</g>
<path d="M138.6 245.3C144.0 243.2 152.3 241.3 159.7 240.7C167.0 240.1 175.7 240.1 182.7 241.5C189.7 242.9 195.4 246.0 201.8 249.2C208.2 252.4 214.6 257.5 221.0 260.7C227.4 263.9 233.7 265.1 240.1 268.3C246.5 271.5 254.2 275.3 259.3 279.8C264.4 284.3 267.6 289.8 270.8 295.2C274.0 300.6 276.9 306.6 278.5 312.4C280.1 318.1 280.3 324.3 280.4 329.7C280.5 335.1 279.8 339.9 279.2 345.0C278.6 350.1 278.3 354.6 276.6 360.3C274.9 366.1 272.4 373.1 268.9 379.5C265.4 385.9 260.3 392.9 255.5 398.6C250.7 404.4 245.2 409.5 240.1 414.0C235.0 418.5 230.6 422.3 224.8 425.5C219.1 428.7 212.0 431.4 205.6 433.1C199.2 434.8 192.2 436.1 186.5 435.8C180.8 435.5 175.7 433.2 171.2 431.2C166.7 429.2 163.9 425.5 159.7 423.6C155.5 421.7 150.4 421.3 146.2 419.7C142.0 418.1 138.8 416.6 134.7 414.0C130.5 411.4 125.4 408.2 121.3 404.4C117.2 400.6 113.3 396.1 109.8 391.0C106.3 385.9 102.9 379.4 100.2 373.7C97.5 367.9 95.3 362.6 93.7 356.5C92.1 350.4 91.1 343.7 90.7 337.3C90.3 330.9 90.6 324.3 91.4 318.2C92.2 312.1 93.5 306.6 95.3 300.9C97.1 295.1 99.1 289.4 102.2 283.7C105.3 277.9 109.6 271.5 113.7 266.4C117.8 261.3 122.9 256.5 127.1 253.0C131.2 249.5 133.2 247.4 138.6 245.3Z" fill="none" stroke="#8a2414" stroke-width="1.5" opacity="0.6"/>
</g>
<path d="M231.800 236L219.500 264" stroke="#b09c38" stroke-width="3" fill="none"/>
<path d="M138.6 245.3C138.3 246.9 133.2 251.1 136.7 254.9C140.2 258.7 152.0 262.2 159.7 268.3C167.4 274.4 176.9 283.6 182.7 291.3C188.4 299.0 192.3 306.0 194.2 314.3C196.1 322.6 196.1 331.6 194.2 341.2C192.3 350.8 187.8 362.9 182.7 371.8C177.6 380.7 170.8 387.1 163.5 394.8C156.2 402.5 142.8 414.0 138.6 417.8" stroke="#fff" stroke-width="0.900" fill="none" opacity="0.75"/>
<path d="M131 252l6 3l3-10" stroke="#fff" stroke-width="0.800" fill="none" opacity="0.9"/>
<path d="M70 296q-2 13 1 26" stroke="#e8b0b0" stroke-width="1.500" fill="none" opacity="0.8"/>
<path d="M305.3 283.4C306.9 281.3 311.2 275.0 315.0 271.0C318.8 267.0 323.1 263.1 328.3 259.4C333.5 255.6 339.5 251.2 346.3 248.5C353.1 245.8 361.7 244.0 369.4 243.4C377.1 242.8 385.6 243.5 392.4 244.7C399.2 245.9 404.5 247.6 410.4 250.4C416.2 253.2 424.6 259.6 427.5 261.5L427.5 261.5C425.4 263.0 419.2 267.0 414.6 270.3C410.0 273.6 405.5 277.6 400.0 281.3C394.5 285.0 388.4 288.9 381.6 292.3C374.8 295.7 366.3 300.9 359.1 301.8C351.9 302.7 345.0 299.7 338.6 297.8C332.2 295.9 326.2 293.0 320.6 290.6C315.1 288.2 307.9 284.6 305.3 283.4Z" fill="#b0b0b0" opacity="0.7" filter="url(#bl3)" transform="translate(3 4)"/>
<path d="M415.0 269.0C420.9 267.3 427.4 266.9 433.6 267.7C439.8 268.5 446.4 271.6 452.0 273.9C457.6 276.2 462.3 279.3 467.5 281.6C472.7 283.9 477.4 284.9 483.0 287.7C488.6 290.5 496.0 294.4 501.4 298.5C506.8 302.6 511.7 307.5 515.3 312.4C518.9 317.3 521.3 322.1 523.0 327.8C524.7 333.5 525.4 340.1 525.4 346.3C525.4 352.5 524.4 358.6 523.0 364.8C521.6 371.0 519.4 377.7 516.8 383.3C514.2 388.9 511.2 393.6 507.6 398.7C504.0 403.8 499.8 409.2 495.2 414.1C490.6 419.0 485.4 424.1 479.8 428.0C474.2 431.9 467.5 435.0 461.3 437.2C455.1 439.4 448.5 440.9 442.9 441.2C437.3 441.4 431.4 440.0 427.5 438.7C423.6 437.4 422.8 434.2 419.7 433.2C416.6 432.2 413.4 433.5 409.0 432.6C404.6 431.7 398.8 430.3 393.6 428.0C388.5 425.7 383.0 422.6 378.1 418.7C373.2 414.8 368.4 410.2 364.3 404.8C360.2 399.4 356.3 393.0 353.5 386.3C350.7 379.6 348.6 372.0 347.3 364.8C346.0 357.6 345.5 349.9 345.8 343.2C346.1 336.5 347.4 330.3 348.9 324.7C350.4 319.1 353.2 313.1 355.0 309.3C356.8 305.5 355.9 305.0 359.7 301.6C363.5 298.2 371.6 292.7 378.0 288.7C384.4 284.7 391.8 281.0 398.0 277.7C404.2 274.4 409.1 270.7 415.0 269.0Z" fill="#9e2616"/>
<g clip-path="url(#cR)">
<ellipse cx="372" cy="355" rx="22" ry="70" fill="#bc4826" opacity="0.9" filter="url(#bl12)"/>
<ellipse cx="356" cy="350" rx="8" ry="55" fill="#c45a2c" opacity="0.7" filter="url(#bl6)"/>
<ellipse cx="430" cy="380" rx="22" ry="60" fill="#8e2014" opacity="0.7" filter="url(#bl12)"/>
<ellipse cx="440" cy="436" rx="60" ry="12" fill="#6a1612" opacity="0.85" filter="url(#bl6)" transform="rotate(-6 440 436)"/>
<ellipse cx="512" cy="385" rx="12" ry="45" fill="#7c1a12" opacity="0.8" filter="url(#bl8)" transform="rotate(22 512 385)"/>
<ellipse cx="438" cy="328" rx="22" ry="11" fill="#4e120e" opacity="0.55" filter="url(#bl6)" transform="rotate(-35 438 328)"/>
<ellipse cx="375" cy="300" rx="26" ry="9" fill="#5a1810" opacity="0.6" filter="url(#bl4)" transform="rotate(-25 375 300)"/>
<path d="M436 271q20 3 36 13l36 21" stroke="#b8a034" stroke-width="10" fill="none" filter="url(#bl2)"/>
<path d="M415.0 269.0C420.9 267.3 427.4 266.9 433.6 267.7C439.8 268.5 446.4 271.6 452.0 273.9C457.6 276.2 462.3 279.3 467.5 281.6C472.7 283.9 477.4 284.9 483.0 287.7C488.6 290.5 496.0 294.4 501.4 298.5C506.8 302.6 511.7 307.5 515.3 312.4C518.9 317.3 521.3 322.1 523.0 327.8C524.7 333.5 525.4 340.1 525.4 346.3C525.4 352.5 524.4 358.6 523.0 364.8C521.6 371.0 519.4 377.7 516.8 383.3C514.2 388.9 511.2 393.6 507.6 398.7C504.0 403.8 499.8 409.2 495.2 414.1C490.6 419.0 485.4 424.1 479.8 428.0C474.2 431.9 467.5 435.0 461.3 437.2C455.1 439.4 448.5 440.9 442.9 441.2C437.3 441.4 431.4 440.0 427.5 438.7C423.6 437.4 422.8 434.2 419.7 433.2C416.6 432.2 413.4 433.5 409.0 432.6C404.6 431.7 398.8 430.3 393.6 428.0C388.5 425.7 383.0 422.6 378.1 418.7C373.2 414.8 368.4 410.2 364.3 404.8C360.2 399.4 356.3 393.0 353.5 386.3C350.7 379.6 348.6 372.0 347.3 364.8C346.0 357.6 345.5 349.9 345.8 343.2C346.1 336.5 347.4 330.3 348.9 324.7C350.4 319.1 353.2 313.1 355.0 309.3C356.8 305.5 355.9 305.0 359.7 301.6C363.5 298.2 371.6 292.7 378.0 288.7C384.4 284.7 391.8 281.0 398.0 277.7C404.2 274.4 409.1 270.7 415.0 269.0Z" fill="#fff" filter="url(#tx3)" opacity="0.18"/>
<path d="M415.0 269.0C420.9 267.3 427.4 266.9 433.6 267.7C439.8 268.5 446.4 271.6 452.0 273.9C457.6 276.2 462.3 279.3 467.5 281.6C472.7 283.9 477.4 284.9 483.0 287.7C488.6 290.5 496.0 294.4 501.4 298.5C506.8 302.6 511.7 307.5 515.3 312.4C518.9 317.3 521.3 322.1 523.0 327.8C524.7 333.5 525.4 340.1 525.4 346.3C525.4 352.5 524.4 358.6 523.0 364.8C521.6 371.0 519.4 377.7 516.8 383.3C514.2 388.9 511.2 393.6 507.6 398.7C504.0 403.8 499.8 409.2 495.2 414.1C490.6 419.0 485.4 424.1 479.8 428.0C474.2 431.9 467.5 435.0 461.3 437.2C455.1 439.4 448.5 440.9 442.9 441.2C437.3 441.4 431.4 440.0 427.5 438.7C423.6 437.4 422.8 434.2 419.7 433.2C416.6 432.2 413.4 433.5 409.0 432.6C404.6 431.7 398.8 430.3 393.6 428.0C388.5 425.7 383.0 422.6 378.1 418.7C373.2 414.8 368.4 410.2 364.3 404.8C360.2 399.4 356.3 393.0 353.5 386.3C350.7 379.6 348.6 372.0 347.3 364.8C346.0 357.6 345.5 349.9 345.8 343.2C346.1 336.5 347.4 330.3 348.9 324.7C350.4 319.1 353.2 313.1 355.0 309.3C356.8 305.5 355.9 305.0 359.7 301.6C363.5 298.2 371.6 292.7 378.0 288.7C384.4 284.7 391.8 281.0 398.0 277.7C404.2 274.4 409.1 270.7 415.0 269.0Z" fill="#fff" filter="url(#tx)" opacity="0.26"/>
<path d="M415.0 269.0C420.9 267.3 427.4 266.9 433.6 267.7C439.8 268.5 446.4 271.6 452.0 273.9C457.6 276.2 462.3 279.3 467.5 281.6C472.7 283.9 477.4 284.9 483.0 287.7C488.6 290.5 496.0 294.4 501.4 298.5C506.8 302.6 511.7 307.5 515.3 312.4C518.9 317.3 521.3 322.1 523.0 327.8C524.7 333.5 525.4 340.1 525.4 346.3C525.4 352.5 524.4 358.6 523.0 364.8C521.6 371.0 519.4 377.7 516.8 383.3C514.2 388.9 511.2 393.6 507.6 398.7C504.0 403.8 499.8 409.2 495.2 414.1C490.6 419.0 485.4 424.1 479.8 428.0C474.2 431.9 467.5 435.0 461.3 437.2C455.1 439.4 448.5 440.9 442.9 441.2C437.3 441.4 431.4 440.0 427.5 438.7C423.6 437.4 422.8 434.2 419.7 433.2C416.6 432.2 413.4 433.5 409.0 432.6C404.6 431.7 398.8 430.3 393.6 428.0C388.5 425.7 383.0 422.6 378.1 418.7C373.2 414.8 368.4 410.2 364.3 404.8C360.2 399.4 356.3 393.0 353.5 386.3C350.7 379.6 348.6 372.0 347.3 364.8C346.0 357.6 345.5 349.9 345.8 343.2C346.1 336.5 347.4 330.3 348.9 324.7C350.4 319.1 353.2 313.1 355.0 309.3C356.8 305.5 355.9 305.0 359.7 301.6C363.5 298.2 371.6 292.7 378.0 288.7C384.4 284.7 391.8 281.0 398.0 277.7C404.2 274.4 409.1 270.7 415.0 269.0Z" fill="#fff" filter="url(#tx2)" opacity="0.5"/>
<g filter="url(#rough)">
<ellipse cx="481" cy="345" rx="25" ry="27" fill="#d88478" opacity="0.6" filter="url(#bl4)" transform="rotate(-20 481 345)"/><ellipse cx="484" cy="347" rx="17" ry="19" fill="#e8aca0" opacity="0.85" filter="url(#bl4)" transform="rotate(-20 484 347)"/>
<ellipse cx="488" cy="352" rx="17" ry="11" fill="#f2ead6" filter="url(#bl2)" transform="rotate(-8 488 352)"/>
</g>
<path d="M415.0 269.0C420.9 267.3 427.4 266.9 433.6 267.7C439.8 268.5 446.4 271.6 452.0 273.9C457.6 276.2 462.3 279.3 467.5 281.6C472.7 283.9 477.4 284.9 483.0 287.7C488.6 290.5 496.0 294.4 501.4 298.5C506.8 302.6 511.7 307.5 515.3 312.4C518.9 317.3 521.3 322.1 523.0 327.8C524.7 333.5 525.4 340.1 525.4 346.3C525.4 352.5 524.4 358.6 523.0 364.8C521.6 371.0 519.4 377.7 516.8 383.3C514.2 388.9 511.2 393.6 507.6 398.7C504.0 403.8 499.8 409.2 495.2 414.1C490.6 419.0 485.4 424.1 479.8 428.0C474.2 431.9 467.5 435.0 461.3 437.2C455.1 439.4 448.5 440.9 442.9 441.2C437.3 441.4 431.4 440.0 427.5 438.7C423.6 437.4 422.8 434.2 419.7 433.2C416.6 432.2 413.4 433.5 409.0 432.6C404.6 431.7 398.8 430.3 393.6 428.0C388.5 425.7 383.0 422.6 378.1 418.7C373.2 414.8 368.4 410.2 364.3 404.8C360.2 399.4 356.3 393.0 353.5 386.3C350.7 379.6 348.6 372.0 347.3 364.8C346.0 357.6 345.5 349.9 345.8 343.2C346.1 336.5 347.4 330.3 348.9 324.7C350.4 319.1 353.2 313.1 355.0 309.3C356.8 305.5 355.9 305.0 359.7 301.6C363.5 298.2 371.6 292.7 378.0 288.7C384.4 284.7 391.8 281.0 398.0 277.7C404.2 274.4 409.1 270.7 415.0 269.0Z" fill="none" stroke="#8a2414" stroke-width="1.500" opacity="0.6"/>
</g>
<path d="M486 240.500l7 2l-3 4q-8 7-11 18l-5.500 21l-3.500-1l5.500-21q3-12 9.500-19.500z" fill="#a88a2c"/><path d="M486 240.500l7 2l-2.500 3.500l-5-1z" fill="#7c5c1c"/>
<path d="M427 261.500q24 2 43 13" stroke="#84c488" stroke-width="1.300" fill="none"/>
<path d="M446 285q10-9 23-10" stroke="#84c488" stroke-width="1.100" fill="none"/>
<path d="M305.3 283.4C306.9 281.3 311.2 275.0 315.0 271.0C318.8 267.0 323.1 263.1 328.3 259.4C333.5 255.6 339.5 251.2 346.3 248.5C353.1 245.8 361.7 244.0 369.4 243.4C377.1 242.8 385.6 243.5 392.4 244.7C399.2 245.9 404.5 247.6 410.4 250.4C416.2 253.2 424.6 259.6 427.5 261.5L427.5 261.5C425.4 263.0 419.2 267.0 414.6 270.3C410.0 273.6 405.5 277.6 400.0 281.3C394.5 285.0 388.4 288.9 381.6 292.3C374.8 295.7 366.3 300.9 359.1 301.8C351.9 302.7 345.0 299.7 338.6 297.8C332.2 295.9 326.2 293.0 320.6 290.6C315.1 288.2 307.9 284.6 305.3 283.4Z" fill="#3fa85a"/>
<g clip-path="url(#cBL)">
<ellipse cx="368" cy="256" rx="34" ry="9" fill="#6cc47e" opacity="0.8" filter="url(#bl4)" transform="rotate(-8 368 256)"/>
<ellipse cx="335" cy="292" rx="30" ry="7" fill="#2c8e46" opacity="0.8" filter="url(#bl4)" transform="rotate(16 335 292)"/>
<ellipse cx="400" cy="278" rx="26" ry="7" fill="#359a4e" opacity="0.7" filter="url(#bl3)" transform="rotate(-32 400 278)"/>
<path d="M306 283.500q60-8 121-22" stroke="#84cc90" stroke-width="1" fill="none" opacity="0.7"/>
<path d="M338 279l12-18M360 274l15-22M384 269l14-18M342 279l20 14M370 274l18 10" stroke="#2f9248" stroke-width="0.800" fill="none" opacity="0.45"/>
</g>
<path d="M445.8 285.0C442.9 285.4 434.2 285.9 428.3 287.6C422.4 289.3 415.9 292.1 410.4 295.3C404.8 298.5 399.5 302.5 395.0 306.8C390.5 311.1 386.1 315.3 383.5 320.9C380.9 326.4 380.2 336.9 379.6 340.1L379.6 340.1C382.6 339.7 391.6 339.3 397.6 337.6C403.6 335.9 409.9 333.3 415.5 329.9C421.1 326.5 426.6 321.7 430.9 317.0C435.2 312.3 438.7 307.0 441.2 301.7C443.7 296.4 445.0 287.8 445.8 285.0Z" fill="#48b460"/>
<g clip-path="url(#cSL)">
<path d="M446 285q-36 20-66 55l40-12l24-28z" fill="#5cc672" opacity="0.7" filter="url(#bl2)"/>
<ellipse cx="398" cy="316" rx="7" ry="24" fill="#35a04e" opacity="0.7" filter="url(#bl3)" transform="rotate(42 398 316)"/>
<path d="M446 285q-40 20-66 55" stroke="#a0dca8" stroke-width="0.800" fill="none" opacity="0.65"/>
<path d="M425 297l4 14M410 307l6 16M397 320l6 14M420 299l-16-4M406 310l-14 2" stroke="#38a050" stroke-width="0.700" fill="none" opacity="0.5"/>
</g>
<path d="M359.6 301.5C362.1 297.5 368.2 283.8 374.3 277.7C380.4 271.6 389.0 267.6 396.3 264.8C403.6 262.1 413.1 261.6 418.3 261.2C423.5 260.8 426.0 262.1 427.5 262.3" stroke="#fff" stroke-width="0.800" fill="none" opacity="0.7"/>
<g fill="none" stroke="#0000ff" stroke-width="1" stroke-dasharray="4 4" shape-rendering="crispEdges">
<path d="M61.500 457.500V234.500H279.500M61.500 457.500H279.500"/>
<path d="M279.500 461.500V231.500H563.500V461.500H279.500"/>
</g>
<rect x="276" y="228" width="8" height="8" rx="3" fill="#000"/>
<rect x="276" y="342" width="8" height="8" rx="3" fill="#000"/>
<rect x="276" y="456" width="8" height="8" rx="3" fill="#000"/>
<rect x="417" y="228" width="8" height="8" rx="3" fill="#000"/>
<rect x="417" y="456" width="8" height="8" rx="3" fill="#000"/>
<rect x="558" y="228" width="8" height="8" rx="3" fill="#000"/>
<rect x="558" y="342" width="8" height="8" rx="3" fill="#000"/>
<rect x="558" y="456" width="8" height="8" rx="3" fill="#000"/>
<path d="M279 342v8h-1q-2 0-2-2.500v-3q0-2.500 2-2.500z" fill="#70d0e0"/><path d="M279.500 342v8" stroke="#0000ff"/>
</svg>
</div>
<div class="a" style="left:759px;top:104px;width:13px;height:460px;background:#eee7cd"></div>
<div class="sb" style="left:759px;top:104px;width:13px;height:13px"></div>
<svg style="left:762px;top:109px" width="7" height="4"><path d="M0.500 3.500h6L3.500 0.500z" fill="#000"/></svg>
<div class="sb" style="left:759px;top:162px;width:13px;height:334px"></div>
<div class="sb" style="left:759px;top:551px;width:13px;height:13px"></div>
<svg style="left:762px;top:556px" width="7" height="4"><path d="M0.500 0.500h6L3.500 3.500z" fill="#000"/></svg>
<div class="a" style="left:34px;top:564px;width:738px;height:13px;background:#eee7cd"></div>
<div class="sb" style="left:34px;top:564px;width:13px;height:13px"></div>
<svg style="left:38px;top:567px" width="4" height="7"><path d="M4 0v7L0 3.5z" fill="#000"/></svg>
<div class="sb" style="left:92px;top:564px;width:600px;height:13px"></div>
<div class="sb" style="left:746px;top:564px;width:13px;height:13px"></div>
<svg style="left:751px;top:567px" width="4" height="7"><path d="M0 0v7L4 3.5z" fill="#000"/></svg>
<div class="a" style="left:759px;top:564px;width:13px;height:13px;background:#e0d7ae;border:1px solid;border-color:#f3edd6 #bfa640 #bfa640 #f3edd6"></div>
<div class="a" style="left:762px;top:567px;width:7px;height:7px;background:#fff;border:1px solid;border-color:#bfa640 #f3edd6 #f3edd6 #bfa640"></div>
<div class="a" style="left:32px;top:103px;width:1px;height:474px;background:#bfa640"></div>
<div class="ln" style="left:0;top:143px;width:32px;background:#bfa640"></div><div class="ln" style="left:0;top:144px;width:32px;background:#f3edd6"></div>
<div class="bd" style="left:4px;top:149px"></div>
<svg style="left:4px;top:149px" width="24" height="22" viewBox="0 0 24 22"><path d="M9 6v11.500l2.600-2.600l2.200 4.300l1.900-1l-2.200-4.200h3.800z" fill="#000"/><path d="M21 20h-7l7-7z" fill="#000"/></svg>
<div class="b" style="left:4px;top:171px"></div>
<svg style="left:4px;top:171px" width="24" height="22" viewBox="0 0 24 22"><rect x="6.500" y="6.500" width="10" height="10" fill="none" stroke="#000" stroke-width="1.200" stroke-dasharray="2 1.400"/><path d="M21 20h-7l7-7z" fill="#000"/></svg>
<div class="b" style="left:4px;top:193px"></div>
<svg style="left:4px;top:193px" width="24" height="22" viewBox="0 0 24 22"><path d="M7 19q0-9 8-14" fill="none" stroke="#000" stroke-width="1.300"/><rect x="9" y="9" width="3" height="3" fill="#000"/><path d="M11.500 11v8l2.500-2.200h4z" fill="#000"/><path d="M21 20h-7l7-7z" fill="#000"/></svg>
<div class="b" style="left:4px;top:215px"></div>
<svg style="left:4px;top:215px" width="24" height="22" viewBox="0 0 24 22"><path d="M10 6v10.500h9M6 10h10.500v9" fill="none" stroke="#bfa640"/><path d="M9 5v10.500h9M5 9h10.500v9" fill="none" stroke="#000" stroke-width="1.400"/><path d="M17.500 5.500l-8.500 10" stroke="#000"/></svg>
<div class="b" style="left:4px;top:237px"></div>
<svg style="left:4px;top:237px" width="24" height="22" viewBox="0 0 24 22"><circle cx="10.500" cy="9" r="5" fill="#f0e8d0" stroke="#000" stroke-width="1.200"/><path d="M14 12.500l4 4" stroke="#000" stroke-width="1.800"/><path d="M21 20h-7l7-7z" fill="#000"/></svg>
<div class="b" style="left:4px;top:259px"></div>
<svg style="left:4px;top:259px" width="24" height="22" viewBox="0 0 24 22"><path d="M5.500 18.500l1.200-2.700l7-7l1.500 1.500l-7 7z" fill="#bfa640" stroke="#000" stroke-width="0.900"/><path d="M13 7l2.500-2.500q1.500-1 2.800.2q1.200 1.300.2 2.800l-2.500 2.500q-2 .2-3-3z" fill="#bfa640" stroke="#000" stroke-width="0.900"/><path d="M12.500 8.500l3 3" stroke="#000" stroke-width="1.600"/></svg>
<div class="b" style="left:4px;top:281px"></div>
<svg style="left:4px;top:281px" width="24" height="22" viewBox="0 0 24 22"><path d="M4 19l4-6h10l-4 6z" fill="#f0ead8"/><path d="M6.500 11.500l5-5.500h8l-5 5.500z" fill="#f0e8d0" stroke="#000"/><path d="M6.500 11.500v3h8v-3M14.500 14.500l5-5.500v-3" fill="#f0e8d0" stroke="#000"/><path d="M21 20h-7l7-7z" fill="#000"/></svg>
<div class="b" style="left:4px;top:303px"></div>
<svg style="left:4px;top:303px" width="24" height="22" viewBox="0 0 24 22"><rect x="7.500" y="7.500" width="11" height="11" fill="none" stroke="#bfa640"/><rect x="6.500" y="6.500" width="11" height="11" fill="none" stroke="#000" stroke-width="1.300"/><path d="M21 20h-7l7-7z" fill="#000"/></svg>
<div class="b" style="left:4px;top:325px"></div>
<svg style="left:4px;top:325px" width="24" height="22" viewBox="0 0 24 22"><text x="3.500" y="18.500" style="opacity:0.999" font-family="Liberation Serif,serif" font-weight="bold" font-size="21" fill="#f0e8d0" stroke="#000" stroke-width="1" textLength="17" lengthAdjust="spacingAndGlyphs">A</text></svg>
<div class="b" style="left:4px;top:347px"></div>
<svg style="left:4px;top:347px" width="24" height="22" viewBox="0 0 24 22"><path d="M4.500 12.500l8-7l7 6.500l-8 7z" fill="#f0e8d0" stroke="#000" stroke-width="1.100"/><path d="M12 5q-2-3-4 0l1 5" fill="none" stroke="#000"/><path d="M19.500 12v7.500h-8z" fill="#000"/><path d="M13 6l6.500 6" stroke="#000" stroke-width="1.600"/></svg>
<div class="b" style="left:4px;top:369px"></div>
<svg style="left:4px;top:369px" width="24" height="22" viewBox="0 0 24 22"><rect x="4.500" y="4.500" width="10" height="10" fill="none" stroke="#000" stroke-width="1.200" stroke-dasharray="2 1"/><rect x="6.500" y="6.500" width="6" height="6" fill="#b0a468"/><rect x="8" y="8" width="4" height="4" fill="#807850"/><rect x="13.500" y="10.500" width="6" height="8.500" rx="3" fill="#f0e8d0" stroke="#000" stroke-width="1.100"/><path d="M13.500 14h6M16.500 10.500v3.500" stroke="#000" stroke-width="0.800"/></svg>
<div class="b" style="left:4px;top:391px"></div>
<svg style="left:4px;top:391px" width="24" height="22" viewBox="0 0 24 22"><path d="M11.500 3.500v5M14.500 3.500v5" stroke="#000" stroke-width="1.300"/><path d="M11 8h4l1 4q.5 4-3 6t-6 1q4-1 4.500-4t-.5-7z" fill="#000"/><path d="M12.500 11q1.500 3-.5 6" stroke="#bfa640" stroke-width="1.300" fill="none"/></svg>
<div class="b" style="left:4px;top:413px"></div>
<svg style="left:4px;top:413px" width="24" height="22" viewBox="0 0 24 22"><defs><pattern id="dth" width="2" height="2" patternUnits="userSpaceOnUse"><rect width="1" height="1" fill="#000"/><rect x="1" y="1" width="1" height="1" fill="#000"/></pattern></defs><path d="M5 5q1 12 15 13v2h-15z" fill="url(#dth)"/><path d="M5 4q0 13 15 14" fill="none" stroke="#000" stroke-width="1.200"/><path d="M20 4l-6 6" stroke="#000" stroke-width="1.300"/><ellipse cx="12" cy="12.500" rx="3.600" ry="2.400" transform="rotate(-40 12 12.500)" fill="#f0e8d0" stroke="#000"/><path d="M6 21h15" stroke="#bfa640"/></svg>
<div class="b" style="left:4px;top:435px"></div>
<svg style="left:4px;top:435px" width="24" height="22" viewBox="0 0 24 22"><circle cx="7.8" cy="4.800" r="1.700" fill="#f4eedc" stroke="#000" stroke-width="0.900"/><path d="M6.5 7.500h2.600l1.200 2.500v3h-5v-3z" fill="#f4eedc" stroke="#000" stroke-width="0.900"/><path d="M6.0 8.500l-2.700 2.800M9.6 8.500l2.700 2.800" stroke="#000" stroke-width="1.100"/><rect x="5.1" y="13" width="2.200" height="5.500" fill="#f4eedc" stroke="#000" stroke-width="0.900" stroke-dasharray="1.500 1"/><rect x="8.3" y="13" width="2.200" height="5.500" fill="#f4eedc" stroke="#000" stroke-width="0.900" stroke-dasharray="1.500 1"/><circle cx="16.8" cy="4.800" r="1.700" fill="#f4eedc" stroke="#000" stroke-width="0.900"/><path d="M15.5 7.500h2.600l1.200 2.500v3h-5v-3z" fill="#f4eedc" stroke="#000" stroke-width="0.900"/><path d="M15.0 8.500l-2.700 2.800M18.6 8.500l2.700 2.800" stroke="#000" stroke-width="1.100"/><rect x="14.100000000000001" y="13" width="2.200" height="5.500" fill="#f4eedc" stroke="#000" stroke-width="0.900" stroke-dasharray="1.500 1"/><rect x="17.3" y="13" width="2.200" height="5.500" fill="#f4eedc" stroke="#000" stroke-width="0.900" stroke-dasharray="1.500 1"/></svg>
<div class="ln" style="left:0;top:461px;width:32px;background:#bfa640"></div><div class="ln" style="left:0;top:462px;width:32px;background:#f3edd6"></div>
<div class="ln" style="left:0;top:577px;width:33px;background:#bfa640"></div>
<div class="a" style="left:773px;top:103px;width:1px;height:475px;background:#f3edd6"></div>
<div class="sb" style="left:778px;top:106px;width:16px;height:16px"></div>
<svg style="left:782px;top:112px" width="8" height="4"><path d="M0 4h8L4 0z" fill="#000"/></svg>
<div class="a" style="left:779px;top:123px;width:15px;height:15px;background:#201820;border:1px solid #000;box-shadow:inset 0 0 0 1px #fff"></div>
<div class="a" style="left:779px;top:139px;width:14px;height:14px;background:#202020;border:1px solid;border-color:#bfa640 #f3edd6 #f3edd6 #bfa640;box-shadow:inset 1px 1px 0 #000"></div>
<div class="a" style="left:779px;top:155px;width:14px;height:14px;background:#303840;border:1px solid;border-color:#bfa640 #f3edd6 #f3edd6 #bfa640;box-shadow:inset 1px 1px 0 #000"></div>
<div class="a" style="left:779px;top:171px;width:14px;height:14px;background:#505050;border:1px solid;border-color:#bfa640 #f3edd6 #f3edd6 #bfa640;box-shadow:inset 1px 1px 0 #000"></div>
<div class="a" style="left:779px;top:187px;width:14px;height:14px;background:#606870;border:1px solid;border-color:#bfa640 #f3edd6 #f3edd6 #bfa640;box-shadow:inset 1px 1px 0 #000"></div>
<div class="a" style="left:779px;top:203px;width:14px;height:14px;background:#808080;border:1px solid;border-color:#bfa640 #f3edd6 #f3edd6 #bfa640;box-shadow:inset 1px 1px 0 #000"></div>
<div class="a" style="left:779px;top:219px;width:14px;height:14px;background:#a0a0a0;border:1px solid;border-color:#bfa640 #f3edd6 #f3edd6 #bfa640;box-shadow:inset 1px 1px 0 #000"></div>
<div class="a" style="left:779px;top:235px;width:14px;height:14px;background:#b0b8b0;border:1px solid;border-color:#bfa640 #f3edd6 #f3edd6 #bfa640;box-shadow:inset 1px 1px 0 #000"></div>
<div class="a" style="left:779px;top:251px;width:14px;height:14px;background:#c8c8c8;border:1px solid;border-color:#bfa640 #f3edd6 #f3edd6 #bfa640;box-shadow:inset 1px 1px 0 #000"></div>
<div class="a" style="left:779px;top:267px;width:14px;height:14px;background:#e0e8e0;border:1px solid;border-color:#bfa640 #f3edd6 #f3edd6 #bfa640;box-shadow:inset 1px 1px 0 #000"></div>
<div class="a" style="left:779px;top:283px;width:14px;height:14px;background:#ffffff;border:1px solid;border-color:#bfa640 #f3edd6 #f3edd6 #bfa640;box-shadow:inset 1px 1px 0 #000"></div>
<div class="a" style="left:779px;top:299px;width:14px;height:14px;background:#284890;border:1px solid;border-color:#bfa640 #f3edd6 #f3edd6 #bfa640;box-shadow:inset 1px 1px 0 #000"></div>
<div class="a" style="left:779px;top:315px;width:14px;height:14px;background:#60c8d0;border:1px solid;border-color:#bfa640 #f3edd6 #f3edd6 #bfa640;box-shadow:inset 1px 1px 0 #000"></div>
<div class="a" style="left:779px;top:331px;width:14px;height:14px;background:#20b050;border:1px solid;border-color:#bfa640 #f3edd6 #f3edd6 #bfa640;box-shadow:inset 1px 1px 0 #000"></div>
<div class="a" style="left:779px;top:347px;width:14px;height:14px;background:#f8f030;border:1px solid;border-color:#bfa640 #f3edd6 #f3edd6 #bfa640;box-shadow:inset 1px 1px 0 #000"></div>
<div class="a" style="left:779px;top:363px;width:14px;height:14px;background:#f04820;border:1px solid;border-color:#bfa640 #f3edd6 #f3edd6 #bfa640;box-shadow:inset 1px 1px 0 #000"></div>
<div class="a" style="left:779px;top:379px;width:14px;height:14px;background:#c070a8;border:1px solid;border-color:#bfa640 #f3edd6 #f3edd6 #bfa640;box-shadow:inset 1px 1px 0 #000"></div>
<div class="a" style="left:779px;top:395px;width:14px;height:14px;background:#804890;border:1px solid;border-color:#bfa640 #f3edd6 #f3edd6 #bfa640;box-shadow:inset 1px 1px 0 #000"></div>
<div class="a" style="left:779px;top:411px;width:14px;height:14px;background:#f07010;border:1px solid;border-color:#bfa640 #f3edd6 #f3edd6 #bfa640;box-shadow:inset 1px 1px 0 #000"></div>
<div class="a" style="left:779px;top:427px;width:14px;height:14px;background:#f0a0b8;border:1px solid;border-color:#bfa640 #f3edd6 #f3edd6 #bfa640;box-shadow:inset 1px 1px 0 #000"></div>
<div class="a" style="left:779px;top:443px;width:14px;height:14px;background:#703830;border:1px solid;border-color:#bfa640 #f3edd6 #f3edd6 #bfa640;box-shadow:inset 1px 1px 0 #000"></div>
<div class="a" style="left:779px;top:459px;width:14px;height:14px;background:#c0c8e8;border:1px solid;border-color:#bfa640 #f3edd6 #f3edd6 #bfa640;box-shadow:inset 1px 1px 0 #000"></div>
<div class="a" style="left:779px;top:475px;width:14px;height:14px;background:#909cd0;border:1px solid;border-color:#bfa640 #f3edd6 #f3edd6 #bfa640;box-shadow:inset 1px 1px 0 #000"></div>
<div class="a" style="left:779px;top:491px;width:14px;height:14px;background:#5898d0;border:1px solid;border-color:#bfa640 #f3edd6 #f3edd6 #bfa640;box-shadow:inset 1px 1px 0 #000"></div>
<div class="a" style="left:779px;top:507px;width:14px;height:14px;background:#6070b0;border:1px solid;border-color:#bfa640 #f3edd6 #f3edd6 #bfa640;box-shadow:inset 1px 1px 0 #000"></div>
<div class="a" style="left:779px;top:523px;width:14px;height:14px;background:#6070b0;border:1px solid;border-color:#bfa640 #f3edd6 #f3edd6 #bfa640;box-shadow:inset 1px 1px 0 #000"></div>
<div class="sb" style="left:778px;top:538px;width:16px;height:16px"></div>
<svg style="left:782px;top:544px" width="8" height="4"><path d="M0 0h8L4 4z" fill="#000"/></svg>
<div class="sb" style="left:778px;top:554px;width:16px;height:16px"></div>
<svg style="left:782px;top:558px" width="8" height="8"><path d="M1 0v8M7 0v8L2 4z" fill="#000" stroke="#000" stroke-width="1.4"/></svg>
<div class="ln" style="left:774px;top:577px;width:24px;background:#bfa640"></div>
<div class="ln" style="left:0;top:578px;width:800px;background:#f3edd6"></div>
<div class="t" style="left:5px;top:585px">Применение постоянной трансформации</div>
<div class="ln" style="left:0;top:598px;width:800px;background:#f3edd6"></div>
<div class="a" style="left:360px;top:99px;width:212px;height:17px;background:#fff;border:1px solid #000"></div>
<div class="t" style="left:363px;top:102px;transform:scaleX(0.912)">Применить постоянную трансформацию</div>
</body></html>
